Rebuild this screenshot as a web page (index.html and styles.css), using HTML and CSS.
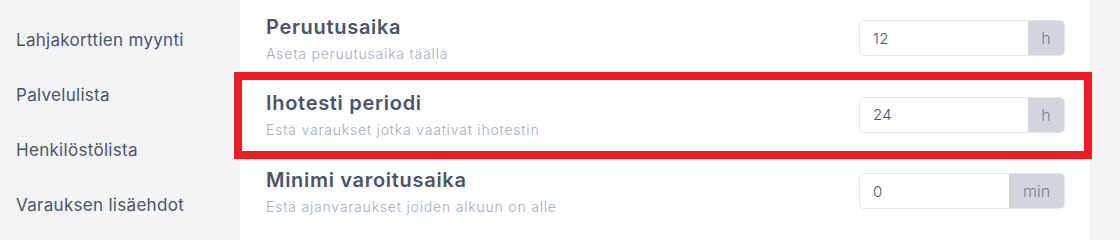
FILE: index.html
```html
<!DOCTYPE html>
<html lang="fi">
<head>
<meta charset="utf-8">
<title>Asetukset</title>
<link rel="stylesheet" href="styles.css">
</head>
<body>
<div class="page">
  <nav class="sidebar">
    <div class="nav-item">Lahjakorttien myynti</div>
    <div class="nav-item">Palvelulista</div>
    <div class="nav-item">Henkilöstölista</div>
    <div class="nav-item">Varauksen lisäehdot</div>
  </nav>
  <main class="main">
    <div class="row">
      <div class="text">
        <div class="title">Peruutusaika</div>
        <div class="sub">Aseta peruutusaika täällä</div>
      </div>
      <div class="field">
        <span class="value">12</span>
        <span class="addon">h</span>
      </div>
    </div>
    <div class="row highlighted">
      <div class="text">
        <div class="title">Ihotesti periodi</div>
        <div class="sub">Estä varaukset jotka vaativat ihotestin</div>
      </div>
      <div class="field">
        <span class="value">24</span>
        <span class="addon">h</span>
      </div>
    </div>
    <div class="row">
      <div class="text">
        <div class="title">Minimi varoitusaika</div>
        <div class="sub">Estä ajanvaraukset joiden alkuun on alle</div>
      </div>
      <div class="field">
        <span class="value">0</span>
        <span class="addon wide">min</span>
      </div>
    </div>
  </main>
  <div class="right-gutter"></div>
</div>
</body>
</html>
```
FILE: styles.css
```css
html, body {
  margin: 0;
  padding: 0;
  height: 100%;
  overflow: hidden;
}
body {
  font-family: Inter, "Open Sans", sans-serif;
  background: #f3f4f6;
}
.page {
  display: flex;
  height: 100vh;
}
.sidebar {
  width: 240px;
  flex: none;
  background: #f3f4f6;
  padding-top: 13px;
  box-sizing: border-box;
}
.nav-item {
  padding-left: 16px;
  font-size: 17px;
  line-height: 55px;
  letter-spacing: 0.3px;
  color: #4a5568;
}
.main {
  width: 850px;
  flex: none;
  background: #ffffff;
}
.right-gutter {
  flex: 1;
  background: #f3f4f6;
}
.row {
  height: 76.5px;
  display: flex;
  align-items: center;
  justify-content: space-between;
  padding: 0 25px 0 26px;
}
.highlighted {
  position: relative;
}
.highlighted::after {
  content: "";
  position: absolute;
  left: -6px;
  right: -2px;
  top: -4.5px;
  bottom: -6px;
  border: 8px solid #ed1c24;
  pointer-events: none;
}
.title {
  font-size: 20px;
  line-height: 28px;
  font-weight: 600;
  letter-spacing: 0.7px;
  color: #4a5568;
}
.sub {
  margin-top: 3px;
  font-size: 14px;
  line-height: 20px;
  letter-spacing: 0.8px;
  font-weight: 300;
  color: #a0aec0;
}
.field {
  display: flex;
  width: 206px;
  height: 36px;
  box-sizing: border-box;
  border: 1px solid #e2e8f0;
  border-radius: 5px;
  overflow: hidden;
}
.value {
  flex: 1;
  display: flex;
  align-items: center;
  padding-left: 13px;
  font-size: 15px;
  font-weight: 300;
  letter-spacing: 0.3px;
  color: #4a5568;
}
.addon {
  width: 36px;
  display: flex;
  align-items: center;
  justify-content: center;
  background: #d2d6dc;
  color: #718096;
  font-size: 16px;
  font-weight: 300;
}
.addon.wide {
  width: 55px;
}
```
